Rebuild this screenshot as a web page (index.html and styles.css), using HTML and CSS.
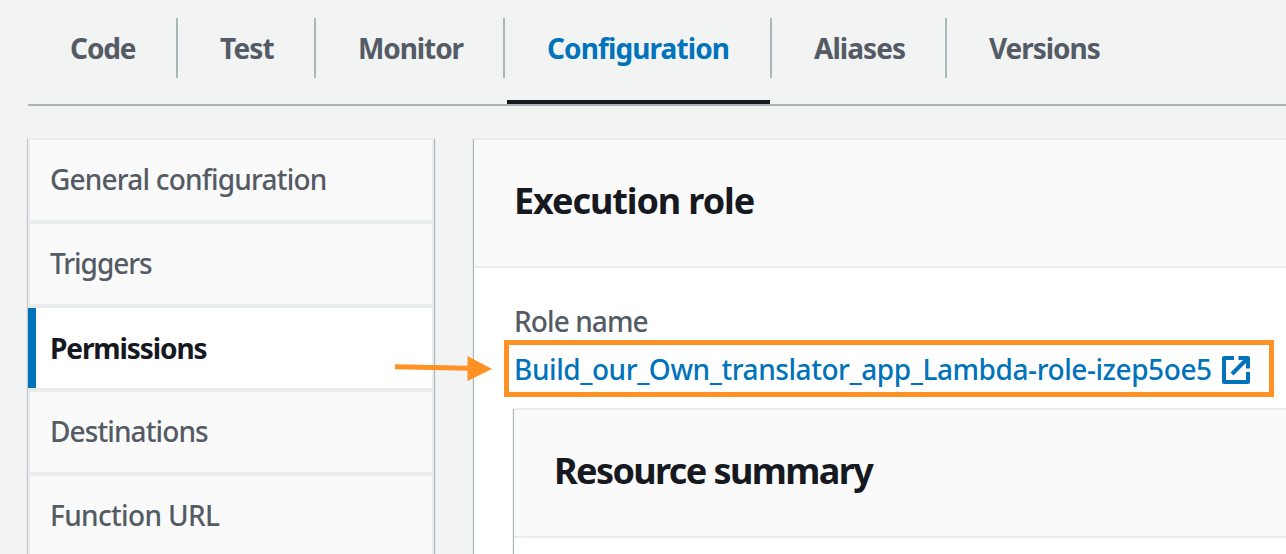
FILE: index.html
```
<!DOCTYPE html>
<html lang="en">
<head>
<meta charset="utf-8">
<title>Configuration</title>
<link rel="stylesheet" href="styles.css">
</head>
<body>
<nav class="tabs">
  <a class="tab tab-code"><span>Code</span></a>
  <a class="tab tab-test"><span>Test</span></a>
  <a class="tab tab-monitor"><span>Monitor</span></a>
  <a class="tab tab-configuration active"><span>Configuration</span></a>
  <a class="tab tab-aliases"><span>Aliases</span></a>
  <a class="tab tab-versions"><span>Versions</span></a>
</nav>
<div class="content">
  <aside class="side">
    <a class="item general">General configuration</a>
    <a class="item triggers">Triggers</a>
    <a class="item selected">Permissions</a>
    <a class="item destinations">Destinations</a>
    <a class="item function-url">Function URL</a>
  </aside>
  <main class="panel">
    <header class="panel-header"><h2 class="execution">Execution role</h2></header>
    <div class="panel-body">
      <div class="label">Role name</div>
      <a class="role-link"><span class="role-name">Build_our_Own_translator_app_Lambda-role-izep5oe5</span>
        <svg class="external" viewBox="0 0 28 28" width="28" height="28"><path d="M12 2H2v24h24V16M16.500 2H26v10.500M25 3 10 18" fill="none" stroke="#0073bb" stroke-width="4" stroke-linejoin="round"/></svg>
      </a>
      <section class="inner">
        <header class="panel-header"><h2 class="summary">Resource summary</h2></header>
      </section>
    </div>
  </main>
</div>
<div class="highlight"></div>
<svg class="arrow" viewBox="0 0 100 28" width="100" height="28"><path d="M1 12.700 74 14.300" stroke="#ff9125" stroke-width="5"/><path d="M73.500 2 98 15 73.500 27z" fill="#ff9125"/></svg>
</body>
</html>
```
FILE: styles.css
```
* { box-sizing: border-box; }
body {
  margin: 0;
  height: 554px;
  overflow: hidden;
  position: relative;
  background: #f2f3f3;
  color: #545b64;
  font: 500 28px/40px "Noto Sans", sans-serif;
}
.tabs {
  display: flex;
  height: 106px;
  margin-left: 28px;
  padding-top: 18px;
  border-bottom: 2px solid #aab7b8;
  font-weight: 700;
}
.tab {
  display: flex;
  flex-direction: column;
  justify-content: space-between;
  height: 86px;
  white-space: nowrap;
}
.tab span {
  height: 60px;
  padding-left: 42px;
  line-height: 60px;
  border-right: 2px solid #aab7b8;
}
.tab-code { width: 150px; letter-spacing: -1.1px; }
.tab-test { width: 138px; letter-spacing: -0.8px; }
.tab-monitor { width: 189px; letter-spacing: -1.1px; }
.tab-configuration { width: 267px; letter-spacing: -0.9px; }
.tab-aliases { width: 175px; letter-spacing: -0.95px; }
.tab-versions { width: 200px; letter-spacing: -1.05px; }
.tab-versions span { border-right: 0; }
.active { color: #0073bb; }
.active::after {
  content: "";
  height: 4px;
  margin: 0 2px;
  background: #16191f;
}
.content {
  display: grid;
  grid-template-columns: 406px 812px;
  column-gap: 40px;
  height: 416px;
  margin: 32px 0 0 28px;
}
.side {
  height: 416px;
  border-top: 2px solid #eaeded;
  box-shadow: 1px 1px 1px #aab7b8, -1px 1px 1px #c5cbcc;
  background: #eaeded;
}
.item {
  display: block;
  height: 80px;
  margin: 0 2px 4px;
  padding-left: 20px;
  line-height: 78px;
  background: #fafafa;
  white-space: nowrap;
  letter-spacing: -0.8px;
}
.triggers { letter-spacing: -1.05px; }
.destinations { letter-spacing: -0.9px; }
.function-url { height: 78px; margin-bottom: 0; letter-spacing: -0.65px; }
.selected {
  margin-left: 0;
  padding-left: 14px;
  border-left: 8px solid #0073bb;
  background: #fff;
  color: #16191f;
  line-height: 80px;
  font-weight: 700;
  letter-spacing: -1.1px;
}
.panel {
  height: 416px;
  border-top: 2px solid #eaeded;
  background: #fff;
  box-shadow: -1px 1px 1px #aab7b8;
}
.panel-header {
  height: 128px;
  padding: 39px 40px 0;
  border-bottom: 2px solid #eaeded;
  background: #fafafa;
}
h2 {
  margin: 0;
  color: #16191f;
  font-size: 36px;
  line-height: 44px;
  letter-spacing: -1.1px;
  white-space: nowrap;
}
.summary { letter-spacing: -1.6px; }
.panel-body { padding: 33px 0 0 40px; }
.label { letter-spacing: -0.9px; }
.role-link {
  display: flex;
  align-items: center;
  height: 56px;
  margin-bottom: 11px;
  color: #0073bb;
}
.role-name { width: 708px; white-space: nowrap; letter-spacing: -0.43px; }
.external { flex: none; margin-top: 2px; }
.inner {
  height: 146px;
  border-top: 2px solid #eaeded;
  background: #fff;
  box-shadow: -1px 1px 1px #aab7b8;
}
.highlight {
  position: absolute;
  left: 504px;
  top: 340px;
  width: 770px;
  height: 57px;
  border: 5px solid #ff9125;
}
.arrow { position: absolute; left: 394px; top: 354px; }
```
